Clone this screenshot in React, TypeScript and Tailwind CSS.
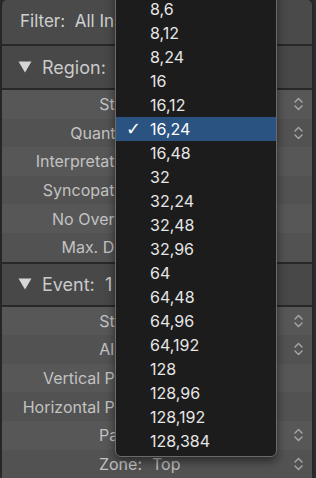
import React from "react";

const regionRows = ["Style:", "Quantize:", "Interpretation:", "Syncopation:", "No Overlap:", "Max. Dots:"];
const eventRows = [
  { label: "Style:", value: "", stepper: true },
  { label: "Align:", value: "", stepper: true },
  { label: "Vertical Pos.:", value: "", stepper: false },
  { label: "Horizontal Pos.:", value: "", stepper: false },
  { label: "Page:", value: "", stepper: true },
  { label: "Zone:", value: "Top", stepper: true },
];

const options = [
  "8,6", "8,12", "8,24", "16", "16,12", "16,24", "16,48", "32", "32,24", "32,48",
  "32,96", "64", "64,48", "64,96", "64,192", "128", "128,96", "128,192", "128,384",
];

function Stepper() {
  return (
    <svg width="9" height="14" viewBox="0 0 9 14" fill="none" stroke="#a8a8a8" strokeWidth="1.4" strokeLinecap="round" strokeLinejoin="round">
      <path d="M1 5 L4.5 1.5 L8 5" />
      <path d="M1 9 L4.5 12.5 L8 9" />
    </svg>
  );
}

function Triangle() {
  return (
    <svg width="14" height="12" viewBox="0 0 14 12">
      <path d="M0.5 0.5 H13.5 L7 11.5 Z" fill="#d6d6d6" />
    </svg>
  );
}

function Row({ label, value, stepper, odd }: { label: string; value?: string; stepper?: boolean; odd: boolean }) {
  return (
    <div className={`flex h-[28.6px] items-center ${odd ? "bg-[#525252]" : "bg-[#575757]"}`}>
      <div className="w-[140px] shrink-0 whitespace-nowrap text-right text-[16px] text-[#c2c2c2]">{label}</div>
      <div className="ml-[10px] flex-1 text-[16px] text-[#bdbdbd]">{value}</div>
      <div className="mr-[9px] flex w-[9px] items-center">{stepper && <Stepper />}</div>
    </div>
  );
}

export default function App() {
  return (
    <div className="h-[478px] w-[316px] bg-[#2b2b2b]" style={{ fontFamily: "Inter, 'Liberation Sans', sans-serif" }}>
      <div className="relative h-[476px] w-[314px] overflow-visible rounded-[5px] border-x-2 border-b-2 border-[#262626] bg-[#282828]">
        <div className="flex h-[44px] items-center rounded-t-[5px] bg-[#4a4a4a] pl-[18px] text-[17px] text-[#d0d0d0]">
          Filter:&nbsp;&nbsp;All Instruments
        </div>
        <div className="mt-[2px] flex h-[42px] items-center gap-[10px] bg-[#484848] pl-[16px] text-[18px] text-[#cacaca]">
          <Triangle />
          <span>Region:&nbsp;&nbsp;Piano</span>
        </div>
        <div className="mt-[2px]">
          {regionRows.map((l, i) => (
            <Row key={l} label={l} stepper={i < 2} odd={i % 2 === 1} />
          ))}
        </div>
        <div className="mt-[2px] flex h-[41px] items-center gap-[10px] bg-[#484848] pl-[16px] text-[18px] text-[#cacaca]">
          <Triangle />
          <span>Event:&nbsp;&nbsp;1 selected</span>
        </div>
        <div className="mt-[2px]">
          {eventRows.map((r, i) => (
            <Row key={r.label} label={r.label} value={r.value} stepper={r.stepper} odd={i % 2 === 1} />
          ))}
        </div>

        <div className="absolute left-[113px] top-[-8px] w-[162px] rounded-b-[6px] border border-[#6a6a6a] bg-[#1c1c1c] pb-[3px] pt-[4px] shadow-[0_4px_10px_rgba(0,0,0,0.5)]">
          {options.map((o) => {
            const sel = o === "16,24";
            return (
              <div key={o} className={`relative flex h-[24px] items-center pl-[34px] text-[16px] ${sel ? "bg-[#2b5382] text-white" : "text-[#e6e6e6]"}`}>
                {sel && <span className="absolute left-[10px] text-[18px] leading-none text-white" style={{ fontFamily: "'DejaVu Sans', sans-serif" }}>✓</span>}
                {o}
              </div>
            );
          })}
        </div>
      </div>
    </div>
  );
}
